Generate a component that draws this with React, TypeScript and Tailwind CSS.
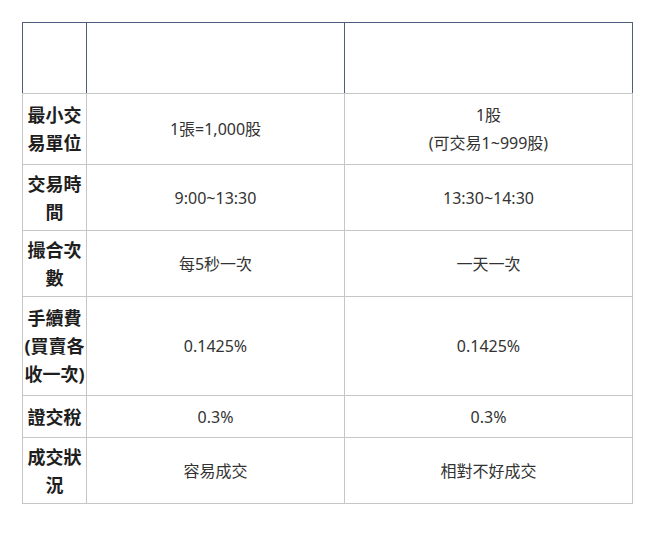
import React from 'react';

const rows: { label: React.ReactNode; h: string; a: React.ReactNode; b: React.ReactNode }[] = [
  { label: <>最小交<br />易單位</>, h: 'h-[71px]', a: '1張=1,000股', b: <>1股<br />(可交易1~999股)</> },
  { label: <>交易時<br />間</>, h: 'h-[66px]', a: '9:00~13:30', b: '13:30~14:30' },
  { label: <>撮合次<br />數</>, h: 'h-[66px]', a: '每5秒一次', b: '一天一次' },
  { label: <>手續費<br />(買賣各<br />收一次)</>, h: 'h-[99px]', a: '0.1425%', b: '0.1425%' },
  { label: '證交稅', h: 'h-[42px]', a: '0.3%', b: '0.3%' },
  { label: <>成交狀<br />況</>, h: 'h-[66px]', a: '容易成交', b: '相對不好成交' },
];

export default function App() {
  return (
    <div className="min-h-[540px] w-[663px] bg-white pl-[22px] pt-[22px] font-['Noto_Sans','Noto_Sans_CJK_TC',sans-serif]">
      <table className="w-[611px] table-fixed border-collapse">
        <colgroup>
          <col className="w-[64px]" />
          <col className="w-[258px]" />
          <col />
        </colgroup>
        <thead>
          <tr className="h-[71px]">
            <th className="border border-[#4f5d7e] border-b-[#c6c6c6]"></th>
            <th className="border border-[#4f5d7e] border-b-[#c6c6c6]"></th>
            <th className="border border-[#4f5d7e] border-b-[#c6c6c6]"></th>
          </tr>
        </thead>
        <tbody>
          {rows.map((r, i) => (
            <tr key={i} className={r.h}>
              <td className="border border-[#c6c6c6] px-[1px] text-center align-middle text-[18px] font-bold leading-[28px] text-[#1e1e1e]">
                {r.label}
              </td>
              <td className="border border-[#c6c6c6] text-center align-middle text-[16px] leading-[28px] text-[#333]">
                {r.a}
              </td>
              <td className="border border-[#c6c6c6] text-center align-middle text-[16px] leading-[28px] text-[#333]">
                {r.b}
              </td>
            </tr>
          ))}
        </tbody>
      </table>
    </div>
  );
}
